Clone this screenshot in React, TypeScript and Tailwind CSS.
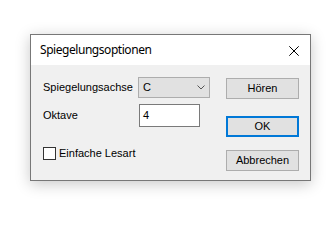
function DialogButton({ label, primary = false }: { label: string; primary?: boolean }) {
  return (
    <button
      className={`flex h-[21px] w-[73px] items-center justify-center bg-[#e1e1e1] text-[11px] text-black ${
        primary ? 'border-2 border-[#0078d7]' : 'border border-[#adadad]'
      }`}
    >
      {label}
    </button>
  );
}

export default function App() {
  return (
    <div className="h-[215px] w-[336px] bg-white pl-[30px] pt-[34px] font-['Liberation_Sans',Arial,sans-serif]">
      <div className="h-[147px] w-[281px] border border-[#777777] bg-[#f0f0f0] shadow-[0_3px_14px_rgba(0,0,0,0.22)]">
        {/* Title bar */}
        <div className="flex h-[30px] items-center justify-between bg-white pl-[9px] pr-[11px]">
          <span className="text-[12px] tracking-[-0.45px] text-black font-['Noto_Sans','Open_Sans',sans-serif]">
            Spiegelungsoptionen
          </span>
          <svg width="10" height="10" viewBox="0 0 10 10" className="mt-[1px]">
            <line x1="0.3" y1="0.3" x2="9.7" y2="9.7" stroke="#000" strokeWidth="1" />
            <line x1="9.7" y1="0.3" x2="0.3" y2="9.7" stroke="#000" strokeWidth="1" />
          </svg>
        </div>

        {/* Body */}
        <div className="flex pl-[12px] pt-[12px] text-[11px] text-black">
          <div className="w-[182px]">
            <div className="flex h-[21px] items-center">
              <span className="w-[95px]">Spiegelungsachse</span>
              <div className="flex h-[21px] w-[72px] items-center justify-between border border-[#adadad] bg-[#e1e1e1] pl-[4px] pr-[4px]">
                <span>C</span>
                <svg width="8" height="5" viewBox="0 0 8 5" className="mb-[1px]">
                  <polyline points="0.5,0.5 4,4 7.5,0.5" fill="none" stroke="#555" strokeWidth="1" />
                </svg>
              </div>
            </div>

            <div className="mt-[6px] flex h-[23px] items-center">
              <span className="w-[96px]">Oktave</span>
              <div className="flex h-[23px] w-[61px] items-center border border-[#7a7a7a] bg-white pl-[3px]">
                4
              </div>
            </div>

            <div className="mt-[18px] flex items-center">
              <div className="h-[13px] w-[13px] border border-[#333333] bg-white" />
              <span className="ml-[3px]">Einfache Lesart</span>
            </div>
          </div>

          <div className="ml-[1px] flex flex-col pt-[1px]">
            <DialogButton label="Hören" />
            <div className="mt-[17px]">
              <DialogButton label="OK" primary />
            </div>
            <div className="mt-[13px]">
              <DialogButton label="Abbrechen" />
            </div>
          </div>
        </div>
      </div>
    </div>
  );
}
